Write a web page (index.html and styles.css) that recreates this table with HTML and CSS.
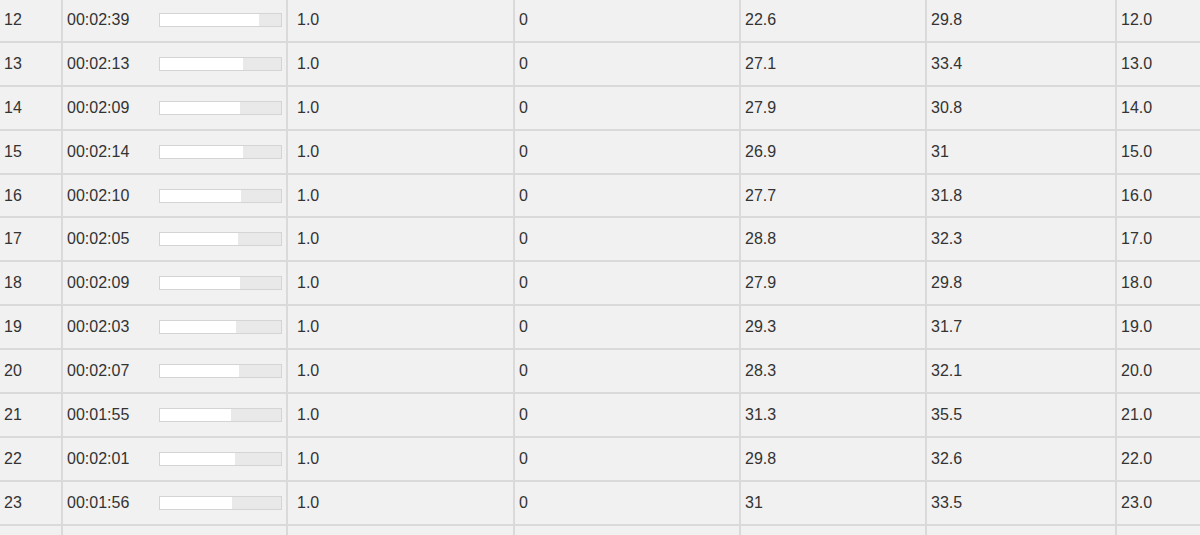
FILE: index.html
```html
<!DOCTYPE html>
<html lang="en">
<head>
  <meta charset="UTF-8" />
  <meta name="viewport" content="width=device-width, initial-scale=1.0" />
  <title>Laps</title>
  <link rel="stylesheet" href="styles.css">
</head>
<body>

  <div class="laps">
    <div class="row">
      <div class="cell">12</div>
      <div class="cell time"><span>00:02:39</span><div class="bar"><div class="fill" style="width:81.5%"></div></div></div>
      <div class="cell wide">1.0</div>
      <div class="cell">0</div>
      <div class="cell">22.6</div>
      <div class="cell">29.8</div>
      <div class="cell">12.0</div>
    </div>
    <div class="row">
      <div class="cell">13</div>
      <div class="cell time"><span>00:02:13</span><div class="bar"><div class="fill" style="width:68.2%"></div></div></div>
      <div class="cell wide">1.0</div>
      <div class="cell">0</div>
      <div class="cell">27.1</div>
      <div class="cell">33.4</div>
      <div class="cell">13.0</div>
    </div>
    <div class="row">
      <div class="cell">14</div>
      <div class="cell time"><span>00:02:09</span><div class="bar"><div class="fill" style="width:66.2%"></div></div></div>
      <div class="cell wide">1.0</div>
      <div class="cell">0</div>
      <div class="cell">27.9</div>
      <div class="cell">30.8</div>
      <div class="cell">14.0</div>
    </div>
    <div class="row">
      <div class="cell">15</div>
      <div class="cell time"><span>00:02:14</span><div class="bar"><div class="fill" style="width:68.7%"></div></div></div>
      <div class="cell wide">1.0</div>
      <div class="cell">0</div>
      <div class="cell">26.9</div>
      <div class="cell">31</div>
      <div class="cell">15.0</div>
    </div>
    <div class="row">
      <div class="cell">16</div>
      <div class="cell time"><span>00:02:10</span><div class="bar"><div class="fill" style="width:66.7%"></div></div></div>
      <div class="cell wide">1.0</div>
      <div class="cell">0</div>
      <div class="cell">27.7</div>
      <div class="cell">31.8</div>
      <div class="cell">16.0</div>
    </div>
    <div class="row">
      <div class="cell">17</div>
      <div class="cell time"><span>00:02:05</span><div class="bar"><div class="fill" style="width:64.1%"></div></div></div>
      <div class="cell wide">1.0</div>
      <div class="cell">0</div>
      <div class="cell">28.8</div>
      <div class="cell">32.3</div>
      <div class="cell">17.0</div>
    </div>
    <div class="row">
      <div class="cell">18</div>
      <div class="cell time"><span>00:02:09</span><div class="bar"><div class="fill" style="width:66.2%"></div></div></div>
      <div class="cell wide">1.0</div>
      <div class="cell">0</div>
      <div class="cell">27.9</div>
      <div class="cell">29.8</div>
      <div class="cell">18.0</div>
    </div>
    <div class="row">
      <div class="cell">19</div>
      <div class="cell time"><span>00:02:03</span><div class="bar"><div class="fill" style="width:63.1%"></div></div></div>
      <div class="cell wide">1.0</div>
      <div class="cell">0</div>
      <div class="cell">29.3</div>
      <div class="cell">31.7</div>
      <div class="cell">19.0</div>
    </div>
    <div class="row">
      <div class="cell">20</div>
      <div class="cell time"><span>00:02:07</span><div class="bar"><div class="fill" style="width:65.1%"></div></div></div>
      <div class="cell wide">1.0</div>
      <div class="cell">0</div>
      <div class="cell">28.3</div>
      <div class="cell">32.1</div>
      <div class="cell">20.0</div>
    </div>
    <div class="row">
      <div class="cell">21</div>
      <div class="cell time"><span>00:01:55</span><div class="bar"><div class="fill" style="width:59.0%"></div></div></div>
      <div class="cell wide">1.0</div>
      <div class="cell">0</div>
      <div class="cell">31.3</div>
      <div class="cell">35.5</div>
      <div class="cell">21.0</div>
    </div>
    <div class="row">
      <div class="cell">22</div>
      <div class="cell time"><span>00:02:01</span><div class="bar"><div class="fill" style="width:62.1%"></div></div></div>
      <div class="cell wide">1.0</div>
      <div class="cell">0</div>
      <div class="cell">29.8</div>
      <div class="cell">32.6</div>
      <div class="cell">22.0</div>
    </div>
    <div class="row">
      <div class="cell">23</div>
      <div class="cell time"><span>00:01:56</span><div class="bar"><div class="fill" style="width:59.5%"></div></div></div>
      <div class="cell wide">1.0</div>
      <div class="cell">0</div>
      <div class="cell">31</div>
      <div class="cell">33.5</div>
      <div class="cell">23.0</div>
    </div>
    <div class="row">
      <div class="cell"></div>
      <div class="cell time"></div>
      <div class="cell wide"></div>
      <div class="cell"></div>
      <div class="cell"></div>
      <div class="cell"></div>
      <div class="cell"></div>
    </div>
  </div>

</body>
</html>
```

FILE: styles.css
```css
:root {
  --bg: #f1f1f1;
  --line: #dadada;
  --text: #333;
  --bar-border: #d4d4d4;
  --bar-empty: #e9e9e9;
}

body {
  margin: 0;
  background-color: var(--bg);
  color: var(--text);
  font-family: "Liberation Sans", Arial, sans-serif;
  font-size: 16px;
  overflow: hidden;
}

.laps {
  margin-top: -1px;
}

.row {
  display: grid;
  grid-template-columns: 61px 225px 227px 226px 186px 190px 1fr;
  height: 43.9px;
  box-sizing: border-box;
  border-bottom: 2px solid var(--line);
}

.cell {
  display: flex;
  align-items: center;
  padding-left: 4px;
  border-left: 2px solid var(--line);
  white-space: nowrap;
}

.cell:first-child {
  border-left: none;
}

.time {
  padding-left: 4px;
  padding-right: 4px;
}

.wide {
  padding-left: 9px;
}

.bar {
  width: 123px;
  height: 14px;
  margin-left: auto;
  box-sizing: border-box;
  border: 1px solid var(--bar-border);
  background-color: var(--bar-empty);
}

.fill {
  height: 100%;
  background-color: #fff;
}
```
